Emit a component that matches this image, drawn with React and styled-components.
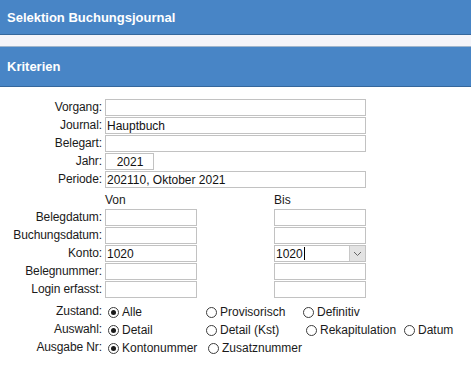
import styled, { createGlobalStyle } from "styled-components";

const GlobalStyle = createGlobalStyle`
  body {
    margin: 0;
    background: #fff;
    font-family: "Liberation Sans", Arial, sans-serif;
    font-size: 12px;
    color: #1a1a1a;
  }
`;

const Header = styled.div`
  height: ${(props) => props.h}px;
  background: #4885c6;
  border-bottom: 1px solid #35679c;
  color: #fff;
  font-weight: bold;
  font-size: 13px;
  padding-left: 7px;
  display: flex;
  align-items: center;
`;

const Strip = styled.div`
  height: 11px;
  background: #f4f4f9;
  border-bottom: 1px solid #9fb5cc;
`;

const Form = styled.div`
  padding-top: 12px;
`;

const Row = styled.div`
  display: grid;
  grid-template-columns: 102px 1fr;
  column-gap: 3px;
  height: 18px;
  align-items: start;
  margin-top: ${(props) => props.mt || 0}px;
`;

const Label = styled.div`
  text-align: right;
  line-height: 17px;
  white-space: nowrap;
  letter-spacing: -0.1px;
`;

const Input = styled.input`
  box-sizing: border-box;
  width: ${(props) => props.w}px;
  height: 17px;
  margin: 0;
  border: 1px solid #c2c2c2;
  padding: 0 0 0 1px;
  font-family: inherit;
  font-size: 12px;
  color: #111;
  background: #fff;
  text-align: ${(props) => (props.center ? "center" : "left")};
  outline: none;
`;

const Pair = styled.div`
  display: grid;
  grid-template-columns: 169px 92px;
`;

const ColHead = styled.div`
  line-height: 17px;
  padding-top: 1px;
`;

const Combo = styled.div`
  box-sizing: border-box;
  width: 92px;
  height: 17px;
  border: 1px solid #c2c2c2;
  display: flex;
  align-items: center;
  padding-left: 1px;
  justify-content: space-between;
`;

const ComboText = styled.span`
  display: flex;
  align-items: center;
  color: #111;
`;

const Caret = styled.span`
  width: 1px;
  height: 13px;
  background: #000;
  margin-left: 1px;
`;

const ComboButton = styled.div`
  box-sizing: border-box;
  width: 16px;
  height: 15px;
  background: #e3e3e3;
  border-left: 1px solid #c8c8c8;
  display: flex;
  align-items: center;
  justify-content: center;
`;

const RadioRow = styled.div`
  display: grid;
  grid-template-columns: ${(props) => props.cols};
  align-items: center;
  height: 18px;
`;

const RadioItem = styled.div`
  display: flex;
  align-items: center;
  gap: 3px;
  padding-left: 3px;
  white-space: nowrap;
`;

const Circle = styled.span`
  box-sizing: border-box;
  width: 11px;
  height: 11px;
  border: 1px solid #3c3c3c;
  border-radius: 50%;
  display: flex;
  align-items: center;
  justify-content: center;
  &::after {
    content: "";
    width: 5px;
    height: 5px;
    border-radius: 50%;
    background: ${(props) => (props.on ? "#1a1a1a" : "transparent")};
  }
`;

const Radio = ({ on, children }) => (
  <RadioItem>
    <Circle on={on ? 1 : 0} />
    <span>{children}</span>
  </RadioItem>
);

const ranges = [
  ["Belegdatum:", "", ""],
  ["Buchungsdatum:", "", ""],
  ["Konto:", "1020", "combo"],
  ["Belegnummer:", "", ""],
  ["Login erfasst:", "", ""],
];

export default function App() {
  return (
    <>
      <GlobalStyle />
      <Header h={34}>Selektion Buchungsjournal</Header>
      <Strip />
      <Header h={39}>Kriterien</Header>
      <Form>
        <Row>
          <Label>Vorgang:</Label>
          <Input w={261} defaultValue="" />
        </Row>
        <Row>
          <Label>Journal:</Label>
          <Input w={261} defaultValue="Hauptbuch" />
        </Row>
        <Row>
          <Label>Belegart:</Label>
          <Input w={261} defaultValue="" />
        </Row>
        <Row>
          <Label>Jahr:</Label>
          <Input w={49} center defaultValue="2021" />
        </Row>
        <Row>
          <Label>Periode:</Label>
          <Input w={261} defaultValue="202110, Oktober 2021" />
        </Row>
        <Row mt={2}>
          <Label />
          <Pair>
            <ColHead>Von</ColHead>
            <ColHead>Bis</ColHead>
          </Pair>
        </Row>
        {ranges.map(([label, value, kind]) => (
          <Row key={label}>
            <Label>{label}</Label>
            <Pair>
              <Input w={92} defaultValue={value} />
              {kind === "combo" ? (
                <Combo>
                  <ComboText>
                    {value}
                    <Caret />
                  </ComboText>
                  <ComboButton>
                    <svg width="9" height="6" viewBox="0 0 9 6">
                      <path d="M1 1 L4.5 4.5 L8 1" fill="none" stroke="#666" strokeWidth="1" />
                    </svg>
                  </ComboButton>
                </Combo>
              ) : (
                <Input w={92} defaultValue={value} />
              )}
            </Pair>
          </Row>
        ))}
        <Row mt={4}>
          <Label>Zustand:</Label>
          <RadioRow cols="98px 97px auto">
            <Radio on>Alle</Radio>
            <Radio>Provisorisch</Radio>
            <Radio>Definitiv</Radio>
          </RadioRow>
        </Row>
        <Row>
          <Label>Auswahl:</Label>
          <RadioRow cols="98px 100px 98px auto">
            <Radio on>Detail</Radio>
            <Radio>Detail (Kst)</Radio>
            <Radio>Rekapitulation</Radio>
            <Radio>Datum</Radio>
          </RadioRow>
        </Row>
        <Row>
          <Label>Ausgabe Nr:</Label>
          <RadioRow cols="100px auto">
            <Radio on>Kontonummer</Radio>
            <Radio>Zusatznummer</Radio>
          </RadioRow>
        </Row>
      </Form>
    </>
  );
}
